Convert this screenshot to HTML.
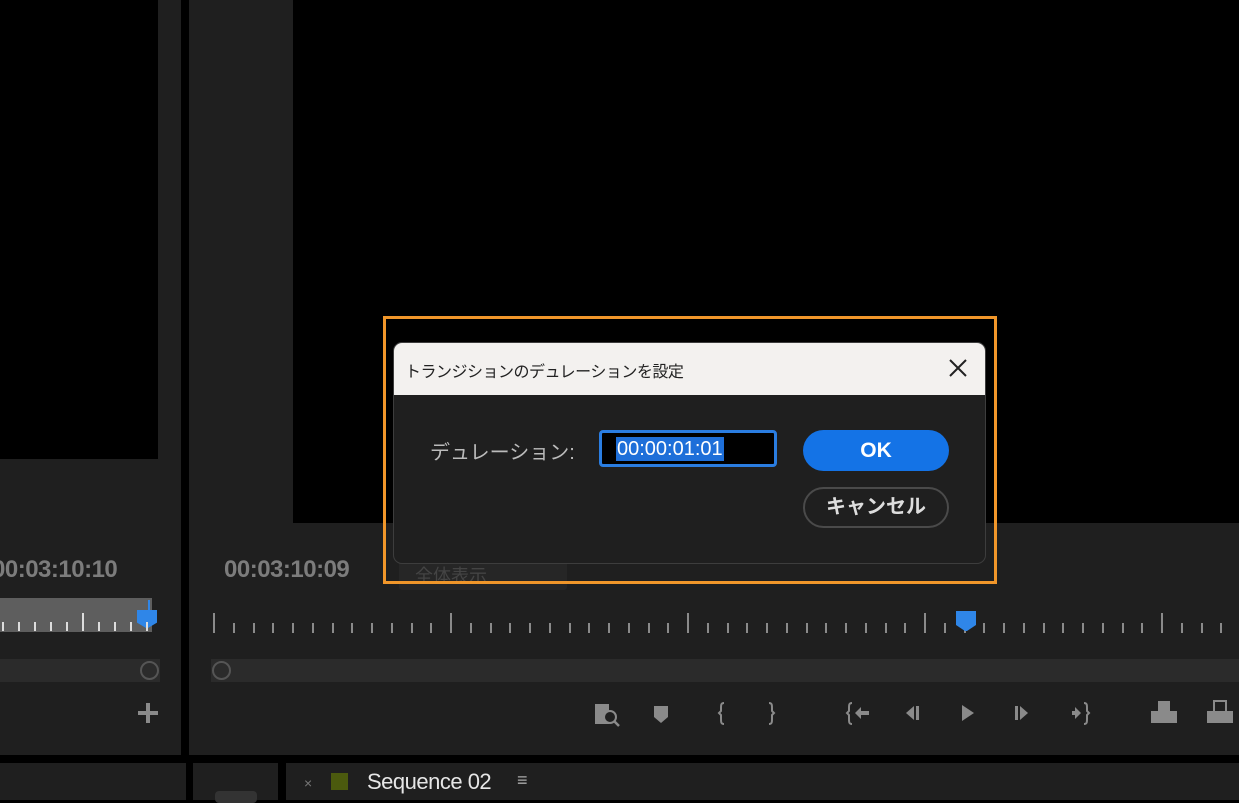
<!DOCTYPE html>
<html><head><meta charset="utf-8"><style>
*{margin:0;padding:0;box-sizing:border-box}
body{width:1239px;height:800px;overflow:hidden;background:#000;position:relative;font-family:"Liberation Sans","Noto Sans CJK JP",sans-serif}
.a{position:absolute}
.tc{color:#7c7c7c;font-weight:bold;font-size:24px;letter-spacing:-0.5px}
.tick{position:absolute;width:2px;background:#8a8a8a}
.ic{position:absolute;fill:#8a8a8a}
</style></head><body>
<div class="a" style="left:0;top:0;width:181px;height:755px;background:#1f1f1f"></div>
<div class="a" style="left:0;top:0;width:158px;height:459px;background:#000"></div>
<div class="a tc" style="left:-8px;top:556px">00:03:10:10</div>
<div class="a" style="left:0;top:598px;width:152px;height:34px;background:#5e5e5e"></div>
<div class="a" style="left:0;top:659px;width:160px;height:23px;background:#2b2b2b"></div>
<div class="a" style="left:140px;top:661px;width:19px;height:19px;border:2px solid #555;border-radius:50%"></div>
<div class="a" style="left:138px;top:711px;width:20px;height:4px;background:#8a8a8a"></div>
<div class="a" style="left:146px;top:703px;width:4px;height:20px;background:#8a8a8a"></div>
<div class="a" style="left:137px;top:610px;width:20px;height:18px;background:#2f86e8;clip-path:polygon(0 0,100% 0,100% 70%,55% 100%,45% 100%,0 70%)"></div>
<div class="a" style="left:148px;top:600px;width:2px;height:14px;background:#2f86e8"></div>
<div class="a" style="left:189px;top:0;width:1050px;height:755px;background:#1f1f1f"></div>
<div class="a" style="left:293px;top:0;width:946px;height:523px;background:#000"></div>
<div class="a tc" style="left:224px;top:556px">00:03:10:09</div>
<div class="a" style="left:399px;top:555px;width:168px;height:35px;background:#262626;border-radius:3px;color:#444;font-size:18px;padding:7px 16px">全体表示</div>
<div id="ruler"></div>
<div class="a" style="left:956px;top:611px;width:20px;height:20px;background:#2f86e8;clip-path:polygon(0 0,100% 0,100% 70%,55% 100%,45% 100%,0 70%)"></div>
<div class="a" style="left:211px;top:659px;width:1028px;height:23px;background:#2b2b2b"></div>
<div class="a" style="left:212px;top:661px;width:19px;height:19px;border:2px solid #555;border-radius:50%"></div>
<svg class="ic" style="left:590px;top:698px" width="650" height="32" viewBox="0 0 650 32">
<rect x="5" y="6" width="14" height="20" fill="#8a8a8a"/><circle cx="20" cy="19" r="6" fill="#1f1f1f" stroke="#8a8a8a" stroke-width="2"/><path d="M24 23l5 5" stroke="#8a8a8a" stroke-width="2.5"/>
<path d="M64 8h14v11l-7 6l-7-6z"/>
<path d="M134 5c-3 0-3 2-3 5v3l-2 2l2 2v4c0 3 0 5 3 5" stroke="#8a8a8a" stroke-width="2" fill="none"/>
<path d="M179 5c3 0 3 2 3 5v3l2 2l-2 2v4c0 3 0 5-3 5" stroke="#8a8a8a" stroke-width="2" fill="none"/>
<path d="M262 5c-3 0-3 2-3 5v3l-2 2l2 2v4c0 3 0 5 3 5" stroke="#8a8a8a" stroke-width="2" fill="none"/><path d="M265 15l6-6v4h8v4h-8v4z"/>
<path d="M316 15l8-7v14z"/><rect x="326" y="8" width="3" height="14"/>
<path d="M372 7l12 8l-12 8z"/>
<rect x="425" y="8" width="3" height="14"/><path d="M430 8l8 7l-8 7z"/>
<path d="M491 15l-6-6v4h-3v4h3v4z"/><path d="M494 5c3 0 3 2 3 5v3l2 2l-2 2v4c0 3 0 5-3 5" stroke="#8a8a8a" stroke-width="2" fill="none"/>
<rect x="568" y="3" width="12" height="12"/><rect x="561" y="13" width="26" height="12"/>
<rect x="624" y="3" width="12" height="12" fill="none" stroke="#8a8a8a" stroke-width="2"/><rect x="617" y="13" width="26" height="12"/>
</svg>
<div class="a" style="left:0;top:763px;width:186px;height:37px;background:#1f1f1f"></div>
<div class="a" style="left:193px;top:763px;width:85px;height:37px;background:#1f1f1f"></div>
<div class="a" style="left:215px;top:791px;width:42px;height:12px;background:#333;border-radius:4px"></div>
<div class="a" style="left:286px;top:763px;width:953px;height:37px;background:#1f1f1f"></div>
<div class="a" style="left:304px;top:775px;color:#777;font-size:14px">×</div>
<div class="a" style="left:331px;top:773px;width:17px;height:17px;background:#4b5a0e"></div>
<div class="a" style="left:367px;top:769px;color:#e6e6e6;font-size:22px;letter-spacing:-0.5px">Sequence 02</div>
<div class="a" style="left:517px;top:770px;color:#aaa;font-size:18px">≡</div>
<div class="a" style="left:383px;top:316px;width:614px;height:268px;border:3px solid #f0962a"></div>
<div class="a" style="left:393px;top:342px;width:593px;height:222px;background:#1f1f1f;border:1px solid #3d3d3d;border-radius:9px;overflow:hidden">
 <div style="height:52px;background:#f3f1ef;color:#222;font-size:16px;padding:15px 0 0 11px;letter-spacing:-0.5px">トランジションのデュレーションを設定</div>
 <svg class="a" style="left:553px;top:14px" width="22" height="22"><path d="M3 3l16 16M19 3L3 19" stroke="#222" stroke-width="2"/></svg>
</div>
<div class="a" style="left:430px;top:436px;color:#bbb;font-size:20px">デュレーション:</div>
<div class="a" style="left:599px;top:430px;width:178px;height:37px;background:#000;border:3px solid #2a7de1;border-radius:4px"></div>
<div class="a" style="left:616px;top:437px;height:24px;background:#1e6fd9;color:#fff;font-size:20px;padding:1px 1px">00:00:01:01</div>
<div class="a" style="left:803px;top:430px;width:146px;height:41px;background:#1473e6;border-radius:21px;color:#fff;font-weight:bold;font-size:21px;text-align:center;line-height:42px">OK</div>
<div class="a" style="left:803px;top:487px;width:146px;height:41px;border:2px solid #4a4a4a;border-radius:21px;color:#ddd;font-weight:bold;font-size:20px;text-align:center;line-height:37px">キャンセル</div>
<script>
var r=document.getElementById('ruler'),h='';
for(var i=0;i<52;i++){var x=213+i*19.75;if(x>1237)break;var maj=i%12==0;h+='<div class="tick" style="left:'+x+'px;top:'+(maj?613:623)+'px;height:'+(maj?20:10)+'px"></div>';}
for(var i=0;i<10;i++){var x=2+i*16;h+='<div class="tick" style="left:'+x+'px;top:'+(i==5?613:622)+'px;height:'+(i==5?18:9)+'px;background:#ddd"></div>';}
r.innerHTML=h;
</script>
</body></html>
